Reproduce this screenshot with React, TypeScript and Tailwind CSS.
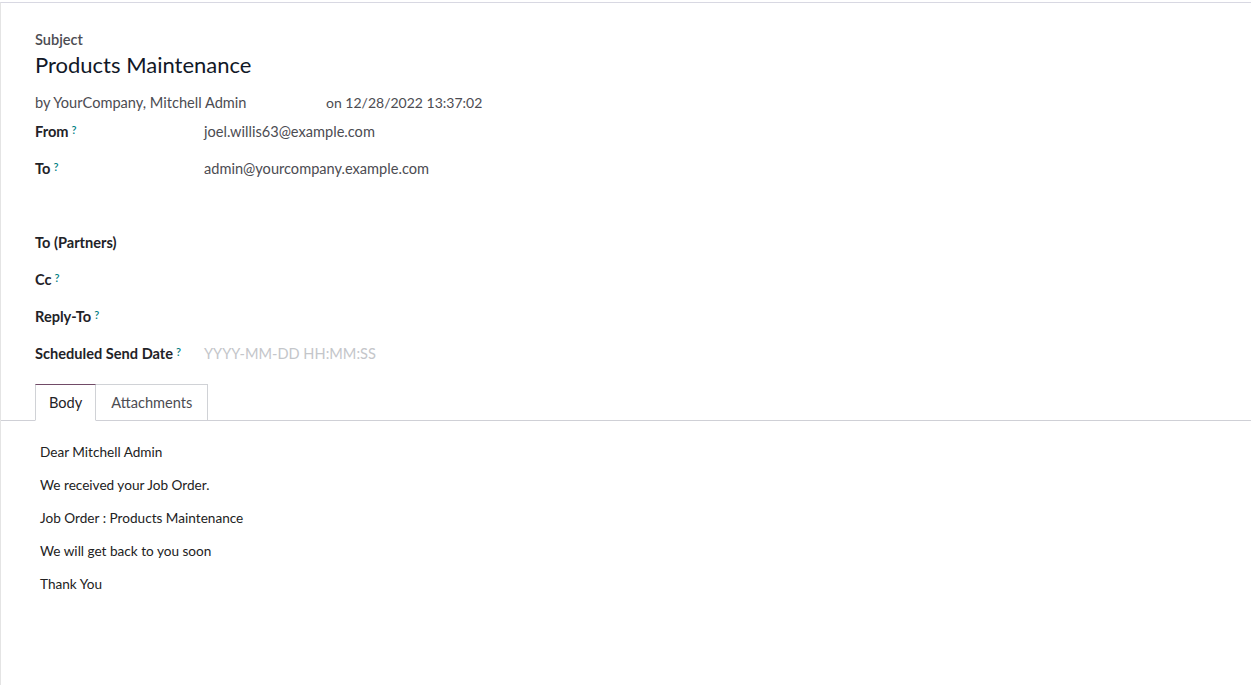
const Help = () => (
  <sup className="ml-[3px] text-[11px] font-semibold text-[#017e84] relative -top-[3px]">?</sup>
);

const fields = [
  { label: "From", help: true, value: "joel.willis63@example.com" },
  { label: "To", help: true, value: "admin@yourcompany.example.com" },
  { label: "", help: false, value: "" },
  { label: "To (Partners)", help: false, value: "" },
  { label: "Cc", help: true, value: "" },
  { label: "Reply-To", help: true, value: "" },
];

const body = [
  "Dear Mitchell Admin",
  "We received your Job Order.",
  "Job Order : Products Maintenance",
  "We will get back to you soon",
  "Thank You",
];

export default function App() {
  return (
    <div
      className="h-[685px] w-full bg-white pt-[2px]"
      style={{ fontFamily: "Lato, 'Noto Sans', sans-serif" }}
    >
      <div className="h-full border-t border-l border-[#d8d8e2] border-l-[#e4e4e4]">
        <div className="px-[34px] pt-[27px]">
          <div className="text-[14.6px] leading-[20px] font-semibold text-[#4c4c52]">Subject</div>
          <h1 className="text-[22px] leading-[30px] text-[#111827]">Products Maintenance</h1>
          <div className="mt-[13px] flex text-[14.6px] leading-[20px] text-[#4c4c52]">
            <span className="w-[291px]">by YourCompany, Mitchell Admin</span>
            <span className="text-[14px]">on 12/28/2022 13:37:02</span>
          </div>

          {fields.map((f, i) => (
            <div key={i} className="flex h-[37px] items-center text-[14.6px]">
              <div className="w-[169px] font-bold text-[#1f2328]">
                {f.label}
                {f.help && <Help />}
              </div>
              <div className="text-[#4c4c52]">{f.value}</div>
            </div>
          ))}
          <div className="flex h-[37px] items-center text-[14.6px]">
            <div className="w-[169px] font-bold text-[#1f2328]">
              Scheduled Send Date
              <Help />
            </div>
            <div className="text-[#c4c6ca]">YYYY-MM-DD HH:MM:SS</div>
          </div>
        </div>

        <div className="mt-[12px] flex border-b border-[#cfd0d6] pl-[34px] text-[14.6px]">
          <div className="-mb-px flex h-[37px] items-center border border-b-white border-[#d0d2d6] border-t-[#714b67] bg-white px-[13px] text-[#1f2328]">
            Body
          </div>
          <div className="flex h-[36px] items-center border border-l-0 border-b-0 border-[#d0d2d6] px-[15px] text-[#4c4c52]">
            Attachments
          </div>
        </div>

        <div className="px-[39px] pt-[21px] text-[13.6px] leading-[20px] text-[#222]">
          {body.map((line) => (
            <p key={line} className="mb-[13px]">
              {line}
            </p>
          ))}
        </div>
      </div>
    </div>
  );
}
